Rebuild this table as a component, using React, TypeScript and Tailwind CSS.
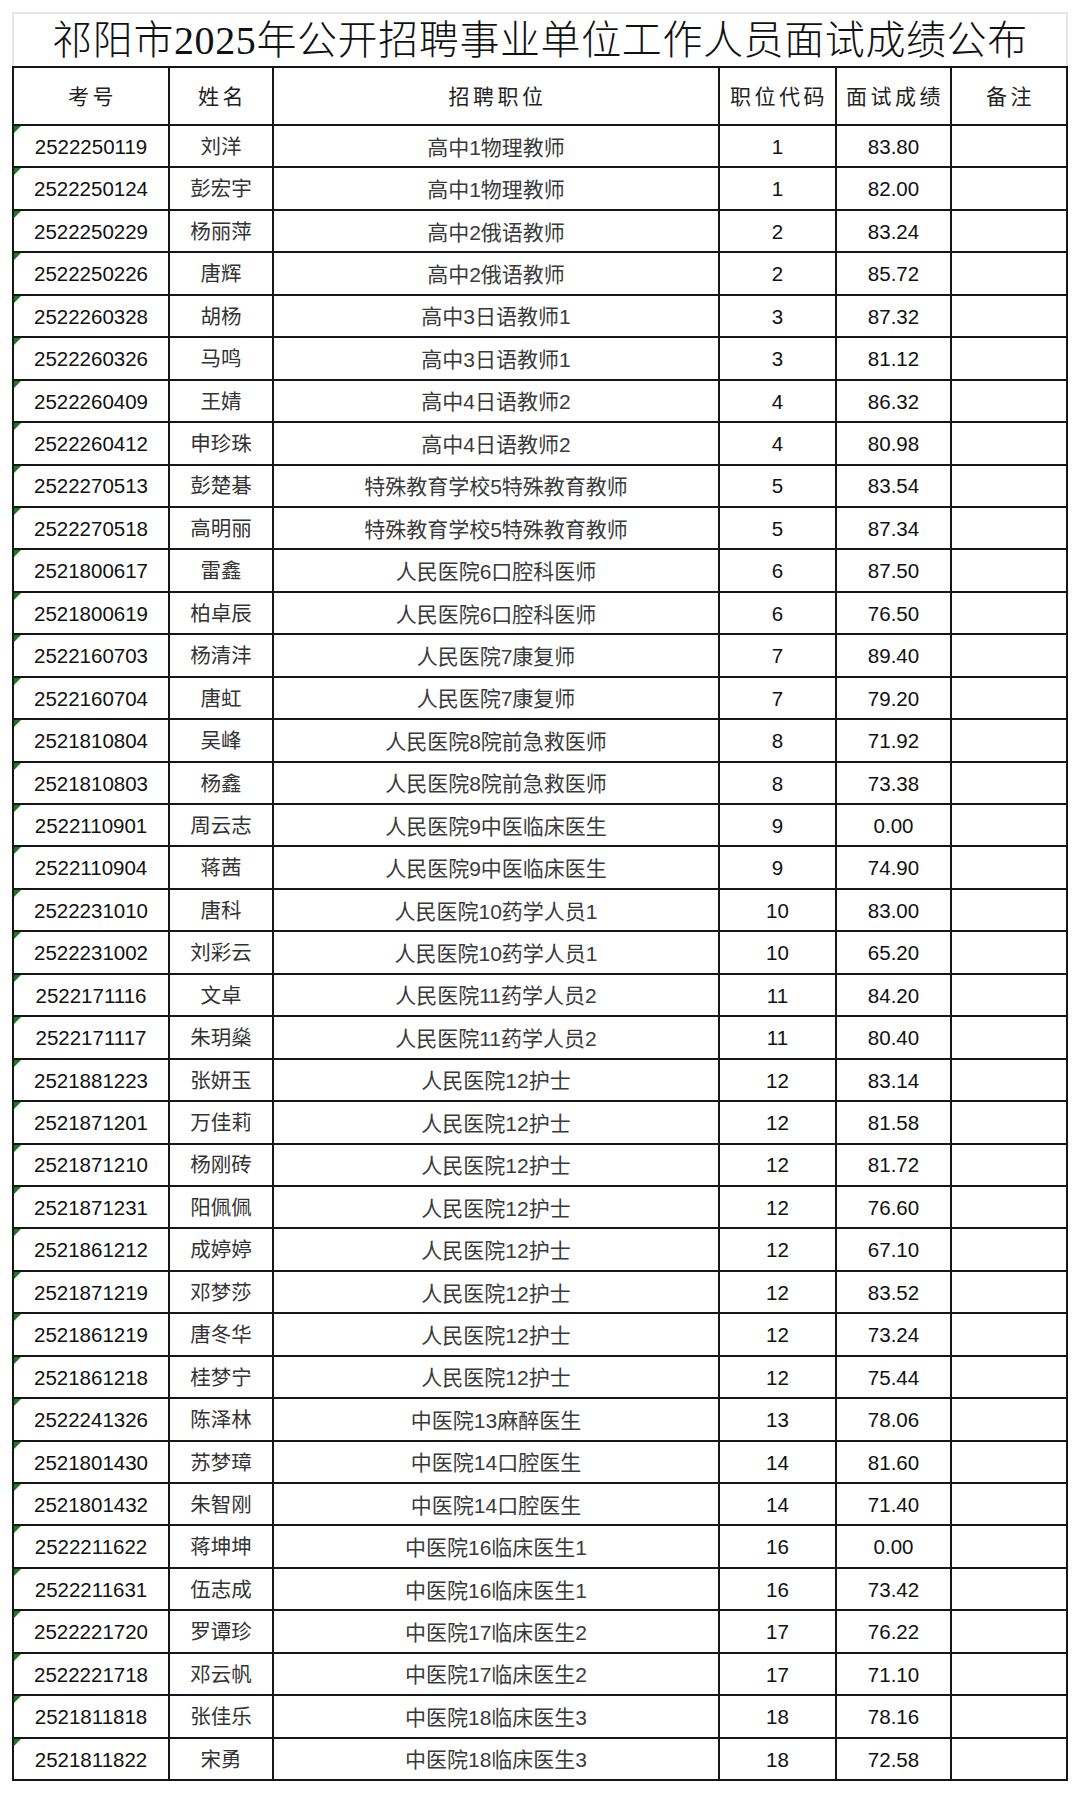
import React from 'react';

const rows: [string, string, string, string, string][] = [
  ['2522250119', '刘洋', '高中1物理教师', '1', '83.80'],
  ['2522250124', '彭宏宇', '高中1物理教师', '1', '82.00'],
  ['2522250229', '杨丽萍', '高中2俄语教师', '2', '83.24'],
  ['2522250226', '唐辉', '高中2俄语教师', '2', '85.72'],
  ['2522260328', '胡杨', '高中3日语教师1', '3', '87.32'],
  ['2522260326', '马鸣', '高中3日语教师1', '3', '81.12'],
  ['2522260409', '王婧', '高中4日语教师2', '4', '86.32'],
  ['2522260412', '申珍珠', '高中4日语教师2', '4', '80.98'],
  ['2522270513', '彭楚碁', '特殊教育学校5特殊教育教师', '5', '83.54'],
  ['2522270518', '高明丽', '特殊教育学校5特殊教育教师', '5', '87.34'],
  ['2521800617', '雷鑫', '人民医院6口腔科医师', '6', '87.50'],
  ['2521800619', '柏卓辰', '人民医院6口腔科医师', '6', '76.50'],
  ['2522160703', '杨清沣', '人民医院7康复师', '7', '89.40'],
  ['2522160704', '唐虹', '人民医院7康复师', '7', '79.20'],
  ['2521810804', '吴峰', '人民医院8院前急救医师', '8', '71.92'],
  ['2521810803', '杨鑫', '人民医院8院前急救医师', '8', '73.38'],
  ['2522110901', '周云志', '人民医院9中医临床医生', '9', '0.00'],
  ['2522110904', '蒋茜', '人民医院9中医临床医生', '9', '74.90'],
  ['2522231010', '唐科', '人民医院10药学人员1', '10', '83.00'],
  ['2522231002', '刘彩云', '人民医院10药学人员1', '10', '65.20'],
  ['2522171116', '文卓', '人民医院11药学人员2', '11', '84.20'],
  ['2522171117', '朱玥燊', '人民医院11药学人员2', '11', '80.40'],
  ['2521881223', '张妍玉', '人民医院12护士', '12', '83.14'],
  ['2521871201', '万佳莉', '人民医院12护士', '12', '81.58'],
  ['2521871210', '杨刚砖', '人民医院12护士', '12', '81.72'],
  ['2521871231', '阳佩佩', '人民医院12护士', '12', '76.60'],
  ['2521861212', '成婷婷', '人民医院12护士', '12', '67.10'],
  ['2521871219', '邓梦莎', '人民医院12护士', '12', '83.52'],
  ['2521861219', '唐冬华', '人民医院12护士', '12', '73.24'],
  ['2521861218', '桂梦宁', '人民医院12护士', '12', '75.44'],
  ['2522241326', '陈泽林', '中医院13麻醉医生', '13', '78.06'],
  ['2521801430', '苏梦璋', '中医院14口腔医生', '14', '81.60'],
  ['2521801432', '朱智刚', '中医院14口腔医生', '14', '71.40'],
  ['2522211622', '蒋坤坤', '中医院16临床医生1', '16', '0.00'],
  ['2522211631', '伍志成', '中医院16临床医生1', '16', '73.42'],
  ['2522221720', '罗谭珍', '中医院17临床医生2', '17', '76.22'],
  ['2522221718', '邓云帆', '中医院17临床医生2', '17', '71.10'],
  ['2521811818', '张佳乐', '中医院18临床医生3', '18', '78.16'],
  ['2521811822', '宋勇', '中医院18临床医生3', '18', '72.58'],
];

const headers = ['考号', '姓名', '招聘职位', '职位代码', '面试成绩', '备注'];

const cell = 'flex items-center justify-center border-r-2 border-b-2 border-[#161616]';

export default function App() {
  return (
    <div className="w-[1080px] h-[1793px] bg-white pt-[12px] pl-[12px] font-['Liberation_Sans','Noto_Sans_CJK_SC',sans-serif]">
      <div className="w-[1056px]">
        <div className="h-[54px] border-t-2 border-x-2 border-[#e6e6e6] flex items-center justify-center">
          <h1 className="text-[40px] leading-none text-[#111] tracking-[0.6px] font-['Liberation_Serif','Noto_Sans_CJK_SC',serif] font-light pt-[2px]">
            祁阳市2025年公开招聘事业单位工作人员面试成绩公布
          </h1>
        </div>
        <div className="grid grid-cols-[156px_104px_446px_117px_115px_116px] border-l-2 border-t-2 border-[#161616] text-[20.5px] leading-none">
          {headers.map((h) => (
            <div key={h} className={`${cell} h-[58px] text-[21px] text-[#222] tracking-[3.5px] pl-[3px]`}>
              {h}
            </div>
          ))}
          {rows.map((r) => (
            <React.Fragment key={r[0]}>
              <div className={`${cell} relative h-[42.44px] pt-[2px] text-[#111]`}>
                <span className="absolute left-0 top-0 w-0 h-0 border-t-[7px] border-r-[7px] border-t-[#1d7a24] border-r-transparent" />
                {r[0]}
              </div>
              <div className={`${cell} h-[42.44px] pt-[2px] text-[#333]`}>{r[1]}</div>
              <div className={`${cell} h-[42.44px] pt-[2px] text-[21px] text-[#3a3a3a]`}>{r[2]}</div>
              <div className={`${cell} h-[42.44px] pt-[2px] text-[#111]`}>{r[3]}</div>
              <div className={`${cell} h-[42.44px] pt-[2px] text-[#111]`}>{r[4]}</div>
              <div className={`${cell} h-[42.44px]`} />
            </React.Fragment>
          ))}
        </div>
      </div>
    </div>
  );
}
